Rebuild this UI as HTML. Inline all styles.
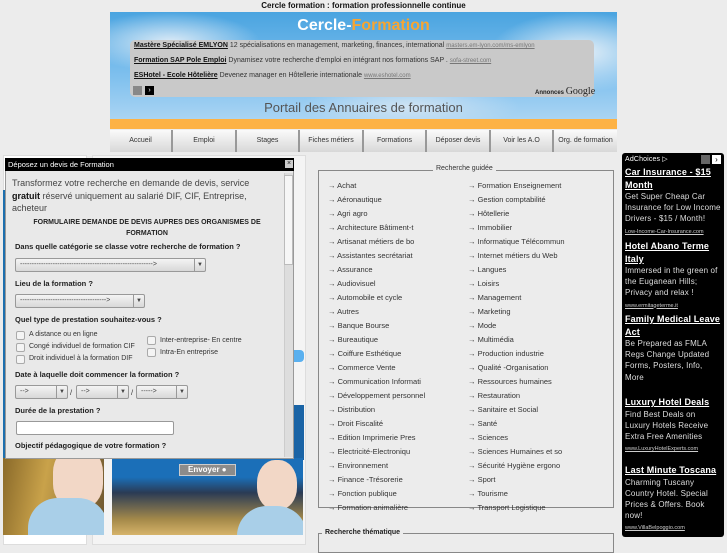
<!DOCTYPE html>
<html><head><meta charset="utf-8"><style>
*{margin:0;padding:0;box-sizing:border-box}
body{width:727px;height:545px;overflow:hidden;background:#ececec;font-family:"Liberation Sans",sans-serif;position:relative;color:#222}
.a{position:absolute}
.t{font-size:8px;white-space:nowrap}
.nav div{position:absolute;top:0;height:22px;border-right:2px solid #999;background:linear-gradient(#fafafa,#d8d8d8);font-size:7px;text-align:center;line-height:22px;color:#333;white-space:nowrap}
.cat{position:absolute;font-size:7.5px;color:#333;white-space:nowrap}
.lb{position:absolute;font-size:7.5px;font-weight:bold;color:#222;white-space:nowrap}
.cb{position:absolute;width:9px;height:9px;border:1px solid #aaa;background:#f4f4f4;border-radius:2px}
.sel{position:absolute;height:14px;border:1px solid #999;background:linear-gradient(#f4f4f4,#d8d8d8);border-radius:2px;font-size:7px;line-height:12px;padding-left:4px;color:#444}
.sel b{position:absolute;right:0;top:0;width:11px;height:12px;border-left:1px solid #999;font-size:6px;text-align:center}
.ad{color:#ddd;font-size:8px;line-height:11.2px;letter-spacing:0.15px}
.ad .h{color:#fff;text-decoration:underline;font-weight:bold;font-size:9px;line-height:12.5px}
.ad .u{color:#ccc;text-decoration:underline;font-size:5.5px;line-height:8px;white-space:nowrap;letter-spacing:0}
.ad>div{position:absolute;left:3px;width:98px;white-space:nowrap}
</style></head><body>
<div class="a t" style="left:0;width:727px;top:1px;text-align:center;font-weight:bold;color:#111">Cercle formation : formation professionnelle continue</div>

<div class="a" style="left:110px;top:12px;width:507px;height:107px;background:radial-gradient(ellipse 90px 30px at 60px 30px,#dbeaf6,transparent),radial-gradient(ellipse 90px 40px at 470px 40px,#e6f0f8,transparent),radial-gradient(ellipse 110px 25px at 300px 95px,#cfe3f3,transparent),linear-gradient(#4aa4e0,#7fc0ee 60%,#a9d4f3)"></div>
<div class="a" style="left:110px;top:17px;width:507px;text-align:center;font-size:16px;font-weight:bold;color:#fff">Cercle-<span style="color:#f7a531">Formation</span></div>
<div class="a" style="left:130px;top:40px;width:464px;height:57px;background:#c9c9c9;border-radius:5px"></div>
<div class="a t" style="left:134px;top:42px;font-size:7px;color:#333"><b style="text-decoration:underline;color:#111">Mastère Spécialisé EMLYON</b> 12 spécialisations en management, marketing, finances, international <u style="color:#777;font-size:6px">masters.em-lyon.com/ms-emlyon</u></div>
<div class="a t" style="left:134px;top:57px;font-size:7px;color:#333"><b style="text-decoration:underline;color:#111">Formation SAP Pole Emploi</b> Dynamisez votre recherche d'emploi en intégrant nos formations SAP . <u style="color:#777;font-size:6px">sofa-street.com</u></div>
<div class="a t" style="left:134px;top:72px;font-size:7px;color:#333"><b style="text-decoration:underline;color:#111">ESHotel - Ecole Hôtelière</b> Devenez manager en Hôtellerie internationale <u style="color:#777;font-size:6px">www.eshotel.com</u></div>
<div class="a" style="left:133px;top:86px;width:9px;height:9px;background:#888"></div>
<div class="a" style="left:145px;top:86px;width:9px;height:9px;background:#000;color:#fff;font-size:7px;line-height:9px;text-align:center">›</div>
<div class="a t" style="left:535px;top:86px;font-size:6px;color:#222"><b>Annonces</b> <span style="font-family:'Liberation Serif',serif;font-size:10px">Google</span></div>
<div class="a" style="left:110px;top:100px;width:507px;text-align:center;font-size:13px;color:#555">Portail des Annuaires de formation</div>
<div class="a" style="left:110px;top:119px;width:507px;height:10px;background:#fdb245"></div>
<div class="a nav" style="left:110px;top:130px;width:507px;height:22px">
<div style="left:0;width:63px">Accueil</div><div style="left:63px;width:64px">Emploi</div><div style="left:127px;width:63px">Stages</div><div style="left:190px;width:64px">Fiches métiers</div><div style="left:254px;width:63px">Formations</div><div style="left:317px;width:64px">Déposer devis</div><div style="left:381px;width:63px">Voir les A.O</div><div style="left:444px;width:63px;border-right:0">Org. de formation</div>
</div>

<div class="a" style="left:3px;top:155px;width:84px;height:390px;background:#fff;border:1px solid #ddd"></div>
<div class="a" style="left:92px;top:155px;width:214px;height:390px;background:#f4f4f4;border:1px solid #ddd"></div>
<div class="a" style="left:3px;top:190px;width:3px;height:270px;background:#1d6fae"></div>
<div class="a" style="left:290px;top:350px;width:14px;height:12px;background:#5ab0ef;border-radius:4px"></div>
<div class="a" style="left:280px;top:405px;width:24px;height:55px;background:#1a64a6"></div>

<div class="a" style="left:3px;top:458px;width:101px;height:77px;background:linear-gradient(100deg,#8a6a2a,#c9a24a 40%,#6c5530);overflow:hidden">
<div class="a" style="left:50px;top:-10px;width:50px;height:60px;background:#f2d7c6;border-radius:40%"></div>
<div class="a" style="left:25px;top:40px;width:80px;height:40px;background:#a9cfe8;border-radius:30px 30px 0 0"></div></div>
<div class="a" style="left:112px;top:458px;width:191px;height:77px;background:linear-gradient(#1b6fb8 0 25%,#2a3b55 45%,#a58a4a 80%,#d6b36a);overflow:hidden">
<div class="a" style="left:145px;top:2px;width:40px;height:50px;background:#f2d7c6;border-radius:45%"></div>
<div class="a" style="left:125px;top:48px;width:70px;height:35px;background:#a9cfe8;border-radius:30px 30px 0 0"></div>
<div class="a" style="left:67px;top:6px;width:57px;height:12px;background:#8b8b8b;border:1px solid #ccc;color:#fff;font-size:8px;font-weight:bold;line-height:10px;padding-left:8px">Envoyer ●</div></div>

<div class="a" style="left:5px;top:158px;width:289px;height:301px;background:#e9e9e9;border:1px solid #999"></div>
<div class="a" style="left:5px;top:158px;width:289px;height:13px;background:#000;color:#fff;font-size:7.5px;line-height:13px;padding-left:3px">Déposez un devis de Formation</div>
<div class="a" style="left:285px;top:160px;width:8px;height:8px;background:#ccc;font-size:7px;line-height:8px;text-align:center">×</div>
<div class="a" style="left:284px;top:173px;width:9px;height:284px;background:#ddd;border-left:1px solid #ccc"></div>
<div class="a" style="left:284px;top:175px;width:9px;height:90px;background:#f6f6f6;border:1px solid #bbb"></div>
<div class="a" style="left:12px;top:177px;font-size:9px;line-height:12.5px;color:#444;white-space:nowrap">Transformez votre recherche en demande de devis, service<br><b style="color:#111">gratuit</b> réservé uniquement au salarié DIF, CIF, Entreprise,<br>acheteur</div>
<div class="a" style="left:12px;top:217px;width:270px;text-align:center;font-size:7px;font-weight:bold;line-height:11px">FORMULAIRE DEMANDE DE DEVIS AUPRES DES ORGANISMES DE FORMATION</div>
<div class="lb" style="left:15px;top:242px">Dans quelle catégorie se classe votre recherche de formation ?</div>
<div class="sel" style="left:15px;top:258px;width:191px">---------------------------------------------------------&gt;<b>▼</b></div>
<div class="lb" style="left:15px;top:279px">Lieu de la formation ?</div>
<div class="sel" style="left:15px;top:294px;width:130px">-------------------------------------&gt;<b>▼</b></div>
<div class="lb" style="left:15px;top:315px">Quel type de prestation souhaitez-vous ?</div>
<div class="cb" style="left:16px;top:331px"></div><div class="cat" style="left:29px;top:331px;font-size:7px">A distance ou en ligne</div>
<div class="cb" style="left:16px;top:343px"></div><div class="cat" style="left:29px;top:343px;font-size:7px">Congé individuel de formation CIF</div>
<div class="cb" style="left:16px;top:355px"></div><div class="cat" style="left:29px;top:355px;font-size:7px">Droit individuel à la formation DIF</div>
<div class="cb" style="left:147px;top:336px"></div><div class="cat" style="left:160px;top:337px;font-size:7px">Inter-entreprise- En centre</div>
<div class="cb" style="left:147px;top:348px"></div><div class="cat" style="left:160px;top:349px;font-size:7px">Intra-En entreprise</div>
<div class="lb" style="left:15px;top:370px">Date à laquelle doit commencer la formation ?</div>
<div class="sel" style="left:15px;top:385px;width:53px">--&gt;<b>▼</b></div><div class="cat" style="left:70px;top:388px">/</div>
<div class="sel" style="left:76px;top:385px;width:53px">--&gt;<b>▼</b></div><div class="cat" style="left:131px;top:388px">/</div>
<div class="sel" style="left:136px;top:385px;width:52px">-----&gt;<b>▼</b></div>
<div class="lb" style="left:15px;top:406px">Durée de la prestation ?</div>
<div class="a" style="left:16px;top:421px;width:158px;height:14px;background:#fff;border:1px solid #999;border-radius:2px"></div>
<div class="lb" style="left:15px;top:441px">Objectif pédagogique de votre formation ?</div>

<div class="a" style="left:318px;top:170px;width:296px;height:338px;border:1px solid #888"></div>
<div class="a t" style="left:433px;top:165px;background:#ececec;padding:0 3px;font-size:7px;color:#333">Recherche guidée</div>
<div class="a" style="left:318px;top:533px;width:296px;height:20px;border:1px solid #888"></div>
<div class="a t" style="left:322px;top:529px;background:#ececec;padding:0 3px;font-size:7px;font-weight:bold">Recherche thématique</div>

<div class="a ad" style="left:622px;top:153px;width:102px;height:384px;background:#000;border-radius:3px">
<div style="top:1px;font-size:7px;color:#fff">AdChoices ▷</div>
<div class="a" style="left:79px;top:2px;width:9px;height:9px;background:#666"></div><div class="a" style="left:90px;top:2px;width:9px;height:9px;background:#fff;color:#000;font-size:8px;line-height:9px;text-align:center">›</div>
<div style="top:13px"><span class="h">Car Insurance - $15<br>Month</span><br>Get Super Cheap Car<br>Insurance for Low Income<br>Drivers - $15 / Month!<br><span class="u">Low-Income-Car-Insurance.com</span></div>
<div style="top:87px"><span class="h">Hotel Abano Terme<br>Italy</span><br>Immersed in the green of<br>the Euganean Hills;<br>Privacy and relax !<br><span class="u">www.ermitageterme.it</span></div>
<div style="top:160px"><span class="h">Family Medical Leave<br>Act</span><br>Be Prepared as FMLA<br>Regs Change Updated<br>Forms, Posters, Info,<br>More</div>
<div style="top:243px"><span class="h">Luxury Hotel Deals</span><br>Find Best Deals on<br>Luxury Hotels Receive<br>Extra Free Amenities<br><span class="u">www.LuxuryHotelExperts.com</span></div>
<div style="top:311px"><span class="h">Last Minute Toscana</span><br>Charming Tuscany<br>Country Hotel. Special<br>Prices &amp; Offers. Book<br>now!<br><span class="u">www.VillaBelpoggio.com</span></div>
</div>

<div class="cat" style="left:328px;top:179px;line-height:14px">
→ Achat<br>→ Aéronautique<br>→ Agri agro<br>→ Architecture Bâtiment-t<br>→ Artisanat métiers de bo<br>→ Assistantes secrétariat<br>→ Assurance<br>→ Audiovisuel<br>→ Automobile et cycle<br>→ Autres<br>→ Banque Bourse<br>→ Bureautique<br>→ Coiffure Esthétique<br>→ Commerce Vente<br>→ Communication Informati<br>→ Développement personnel<br>→ Distribution<br>→ Droit Fiscalité<br>→ Edition Imprimerie Pres<br>→ Electricité-Electroniqu<br>→ Environnement<br>→ Finance -Trésorerie<br>→ Fonction publique<br>→ Formation animalière</div>
<div class="cat" style="left:468px;top:179px;line-height:14px">
→ Formation Enseignement<br>→ Gestion comptabilité<br>→ Hôtellerie<br>→ Immobilier<br>→ Informatique Télécommun<br>→ Internet métiers du Web<br>→ Langues<br>→ Loisirs<br>→ Management<br>→ Marketing<br>→ Mode<br>→ Multimédia<br>→ Production industrie<br>→ Qualité -Organisation<br>→ Ressources humaines<br>→ Restauration<br>→ Sanitaire et Social<br>→ Santé<br>→ Sciences<br>→ Sciences Humaines et so<br>→ Sécurité Hygiène ergono<br>→ Sport<br>→ Tourisme<br>→ Transport Logistique</div>
</body></html>
